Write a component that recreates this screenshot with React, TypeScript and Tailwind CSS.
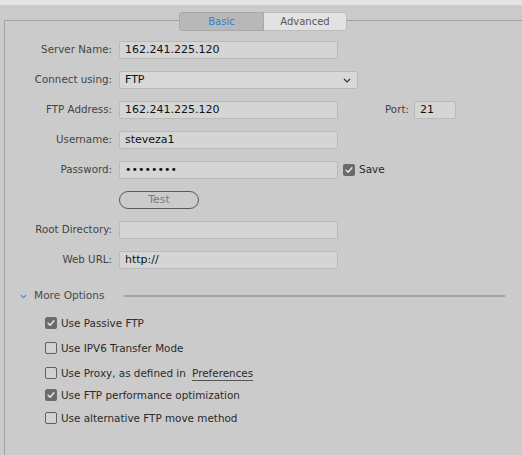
import React from 'react';

const font = { fontFamily: '"DejaVu Sans", "Liberation Sans", sans-serif' };

const CheckBox = ({ checked }: { checked?: boolean }) =>
    checked ? (
        <span className="flex h-[12px] w-[12px] shrink-0 items-center justify-center rounded-[2px] bg-[#6b6b6b]">
            <svg viewBox="0 0 12 12" className="h-[10px] w-[10px]" fill="none">
                <path d="M2.5 6.3 L5 8.6 L9.5 3.3" stroke="#e8e8e8" strokeWidth={1.8} strokeLinecap="round" strokeLinejoin="round" />
            </svg>
        </span>
    ) : (
        <span className="h-[12px] w-[12px] shrink-0 rounded-[2px] border border-[#5f5f5f] bg-[#d2d2d2]" />
    );

const Field = ({ label, value, width = 'w-[219px]', children }: { label: string; value?: string; width?: string; children?: React.ReactNode }) => (
    <div className="flex h-[18px] items-center">
        <div className="w-[108px] pr-[1px] text-right text-[10.3px] text-[#444]">{label}</div>
        <div className={`ml-[6px] flex h-[18px] ${width} items-center rounded-[2px] border border-[#bababa] bg-[#d5d5d5] px-[5px] text-[11px] text-[#111]`}>
            {value}
        </div>
        {children}
    </div>
);

const Option = ({ checked, children }: { checked?: boolean; children: React.ReactNode }) => (
    <div className="flex h-[14px] items-center gap-[4px] text-[10.4px] leading-[14px] text-[#2a2a2a]">
        <CheckBox checked={checked} />
        <span className="whitespace-nowrap">{children}</span>
    </div>
);

export default function App() {
    return (
        <div className="h-[455px] w-[522px] overflow-hidden bg-[#cbcbcb]" style={font}>
            <div className="h-[5px] bg-[#e4e4e4]" />
            <div className="relative ml-[4px] mt-[15px] h-[440px] border-l border-t border-[#a2a2a2] pt-[20px]">
                {/* Tabs */}
                <div className="absolute left-[174px] top-[-9px] flex h-[19px] text-[10px]">
                    <div className="flex w-[85px] items-center justify-center rounded-l-[3px] border border-[#a8a8a8] bg-[#b8b8b8] text-[#2f7fd3]">
                        Basic
                    </div>
                    <div className="flex w-[83px] items-center justify-center rounded-r-[3px] border border-l-0 border-[#bdbdbd] bg-[#e2e2e2] text-[#555]">
                        Advanced
                    </div>
                </div>

                <div className="flex flex-col gap-[12px]">
                    <Field label="Server Name:" value="162.241.225.120" />
                    <div className="flex h-[18px] items-center">
                        <div className="w-[108px] pr-[1px] text-right text-[10.3px] text-[#444]">Connect using:</div>
                        <div className="ml-[6px] flex h-[18px] w-[239px] items-center justify-between rounded-[2px] border border-[#bababa] bg-[#d8d8d8] pl-[5px] pr-[6px] text-[11px] text-[#111]">
                            <span>FTP</span>
                            <svg viewBox="0 0 8 5" className="h-[5px] w-[8px]" fill="none">
                                <path d="M1 1 L4 4 L7 1" stroke="#333" strokeWidth={1.2} />
                            </svg>
                        </div>
                    </div>
                    <Field label="FTP Address:" value="162.241.225.120">
                        <span className="ml-[47px] text-[10.3px] text-[#444]">Port:</span>
                        <div className="ml-[5px] flex h-[18px] w-[42px] items-center rounded-[2px] border border-[#bababa] bg-[#d5d5d5] px-[5px] text-[11px] text-[#111]">
                            21
                        </div>
                    </Field>
                    <Field label="Username:" value="steveza1" />
                    <Field label="Password:" value="••••••••">
                        <div className="ml-[5px] flex items-center gap-[4px] text-[10.5px] text-[#2a2a2a]">
                            <CheckBox checked />
                            <span>Save</span>
                        </div>
                    </Field>
                    <div className="flex h-[18px] items-center">
                        <div className="w-[108px]" />
                        <button className="ml-[6px] flex h-[18px] w-[80px] items-center justify-center rounded-full border border-[#5a5a5a] text-[10.8px] text-[#7a7a7a]">
                            Test
                        </button>
                    </div>
                    <Field label="Root Directory:" value="" />
                    <Field label="Web URL:" value="http://" />
                </div>

                {/* More Options */}
                <div className="mt-[20px] flex h-[14px] items-center pl-[15px]">
                    <svg viewBox="0 0 8 5" className="h-[5px] w-[7px]" fill="none">
                        <path d="M1 1 L4 4 L7 1" stroke="#3a7fd0" strokeWidth={1.2} />
                    </svg>
                    <span className="ml-[7px] text-[10.6px] text-[#4a4a4a]">More Options</span>
                    <div className="ml-[19px] h-[2px] w-[381px] bg-[#a3a3a3]" />
                </div>

                <div className="mt-[13px] flex flex-col pl-[40px]">
                    <Option checked>Use Passive FTP</Option>
                    <div className="mt-[11px]">
                        <Option>Use IPV6 Transfer Mode</Option>
                    </div>
                    <div className="mt-[11px]">
                        <Option>
                            Use Proxy, as defined in{' '}
                            <span className="ml-[3px] border-b border-[#555] pb-[1px]">Preferences</span>
                        </Option>
                    </div>
                    <div className="mt-[8px]">
                        <Option checked>Use FTP performance optimization</Option>
                    </div>
                    <div className="mt-[9px]">
                        <Option>Use alternative FTP move method</Option>
                    </div>
                </div>
            </div>
        </div>
    );
}
